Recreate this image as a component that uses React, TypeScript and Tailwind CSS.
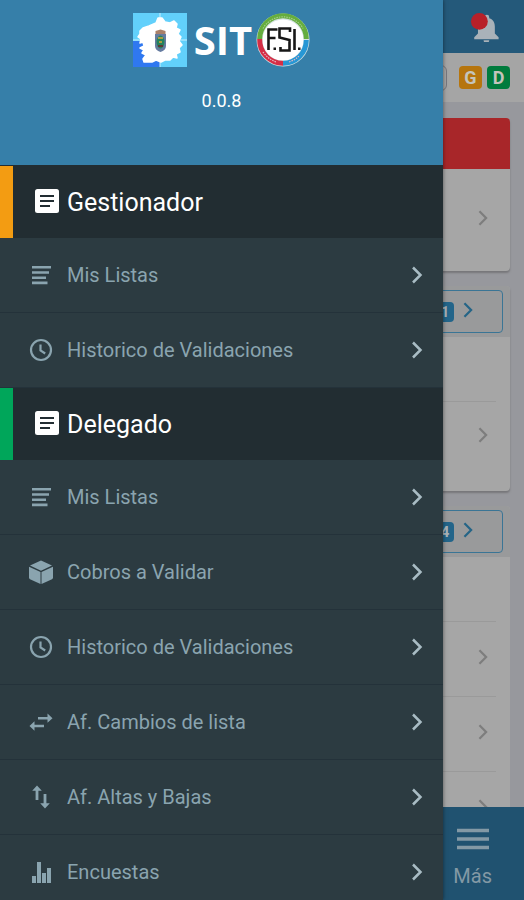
import type { ReactNode } from "react";

type IconName = "lines" | "clock" | "cube" | "swap" | "updown" | "bars";

const icons: Record<IconName, ReactNode> = {
  lines: (
    <path d="M3 3h19v2.600H3zM3 8.200h17v2.600H3zM3 13.400h14v2.600H3zM3 18.600h15.500v2.600H3z" fill="currentColor" />
  ),
  clock: (
    <g fill="none" stroke="currentColor" strokeWidth="2.200">
      <circle cx="12" cy="12" r="10" />
      <path d="M11.500 6.500v6l4.700 3" />
    </g>
  ),
  cube: (
    <g fill="currentColor">
      <path d="M12 0.500l11 5L12 10.700 1 5.500z" />
      <path d="M0 6.700l11.500 5.300V24L1 19.200Q0 18.700 0 17.500z" />
      <path d="M24 6.700l-11.500 5.300V24L23 19.200Q24 18.700 24 17.500z" />
    </g>
  ),
  swap: (
    <g fill="currentColor">
      <path d="M9 6.900h9.500V3.500L23.500 8.200 18.500 12.800V9.500H9z" />
      <path d="M15 14.700H5.500v-3.400L.5 16l5 4.700v-3.400H15z" />
    </g>
  ),
  updown: (
    <g fill="currentColor">
      <path d="M6.600 15V5.700H3.200L8 .5l4.800 5.200H9.400V15z" />
      <path d="M14.600 9v9.300h-3.400l4.800 5.200 4.800-5.200h-3.400V9z" />
    </g>
  ),
  bars: (
    <path d="M3 16h4v7H3zM8 2h4v21H8zM13 13h4v10h-4zM18 8h4v15h-4z" fill="currentColor" />
  ),
};

function Chevron({ className }: { className: string }) {
  return (
    <svg viewBox="0 0 12 18" className={`w-3 shrink-0 ${className}`} aria-hidden="true">
      <path d="M2 1.500L9.500 9 2 16.500" fill="none" stroke="currentColor" strokeWidth="2.500" />
    </svg>
  );
}

function MenuHeader({ title, accent }: { title: string; accent: string }) {
  return (
    <h2 className={`flex h-[72px] items-center gap-2 border-l-[13px] bg-[#222d32] pt-[2px] pl-[22px] text-[25px] leading-8 text-white ${accent}`}>
      <svg viewBox="0 0 24 24" className="mb-1 size-6 shrink-0" aria-hidden="true">
        <rect width="24" height="24" rx="2.500" fill="#fff" />
        <path d="M5 7h14M5 12h14M5 17h10" stroke="#222d32" strokeWidth="2.200" />
      </svg>
      {title}
    </h2>
  );
}

function MenuItem({ label, icon }: { label: string; icon: IconName }) {
  return (
    <li>
      <button type="button" className="flex h-[75px] w-full items-center border-b border-[#24323a] pr-5 pl-[29px] text-left text-[20px] leading-6 text-[#8aa4af]">
        <svg viewBox="0 0 24 24" className="mr-[14px] size-6 shrink-0" aria-hidden="true">
          {icons[icon]}
        </svg>
        <span className="flex-1">{label}</span>
        <Chevron className="h-[18px] text-[#a9bcc4]" />
      </button>
    </li>
  );
}

function SitLogo() {
  return (
    <svg viewBox="0 0 54 54" className="size-[54px]" aria-hidden="true">
      <rect width="54" height="54" fill="#62d0fb" />
      <path d="M0 28h27v26H0z" fill="#2f78f0" />
      <path d="M27 0v54M0 27h54" stroke="#c8f0ff" strokeWidth="1" />
      <path d="M7 18l3-3 6-2 7-3 2-5 4 0 3 4 5 1 4-2 3 3-1 4 4 2-2 4 3 3-2 4 3 4-3 3 1 4-4 2 1 4-4-1-3 3-5 0-4 2-5-2-4 2-8 0-1-3 3-4-4-2 2-3-4-2 4-2-1-4-3 1 1-4-3-2 2-3z" fill="#fff" stroke="#fff" strokeWidth="1.500" strokeLinejoin="round" />
      <path d="M22 21h11v12c0 3-2 5-5.500 6-3.500-1-5.500-3-5.500-6z" fill="#657ba0" />
      <path d="M22.500 21l0-3 5-1.500 5 1.500v3z" fill="#a98069" />
      <ellipse cx="27.500" cy="29" rx="4" ry="6.500" fill="#24825c" />
      <path d="M25 25h5M26 29h3" stroke="#d4a83b" strokeWidth="1.500" />
      <path d="M25 33h5" stroke="#5b3a35" strokeWidth="2" />
    </svg>
  );
}

function FsiLogo() {
  return (
    <svg viewBox="0 0 54 54" className="size-[54px]" aria-hidden="true">
      <circle cx="27" cy="27" r="26.500" fill="#d5e2e2" />
      <circle cx="27" cy="27" r="20.500" fill="#fff" />
      <g fill="none" strokeWidth="5">
        <path d="M3.700 26a23.300 23.300 0 0 1 46.600 0" stroke="#65ad3e" />
        <path d="M50.300 27A23.300 23.300 0 0 1 27 50.300" stroke="#2797d5" />
        <path d="M27 50.300A23.300 23.300 0 0 1 3.700 26" stroke="#d52e46" />
        <path d="M7 15.500A23 23 0 0 1 47 15.500" stroke="#a5ce8b" strokeWidth="1.200" strokeDasharray="1.500 1" />
        <path d="M7 39q5 7 13 10M33 49q6-2 10-6" stroke="#e6b6c0" strokeWidth="1.200" strokeDasharray="1.500 1" />
      </g>
      <g fill="none" stroke="#171717" strokeWidth="2.600">
        <path d="M12.500 37V16.500h9M12.500 25h7M34 19v-3.500H23.500v9L33.500 27v10.500h-9V34M38.500 16v21" />
      </g>
      <path d="M17.500 34.500H20V37h-2.500zM42 34.500h2.500V37H42z" fill="#171717" />
    </svg>
  );
}

function Drawer() {
  return (
    <aside className="absolute inset-y-0 left-0 w-[443px] max-w-full overflow-hidden bg-[#2c3b41] shadow-[0_0_4px_rgba(0,0,0,0.5)]">
      <header className="flex h-[166px] flex-col items-center border-b border-[#222d32] bg-[#367fa9] pt-[13px] text-white">
        <div className="flex items-center">
          <SitLogo />
          <span className="mr-1 ml-[7px] font-['Open_Sans',sans-serif] text-[40px] leading-[54px] font-bold">SIT</span>
          <FsiLogo />
        </div>
        <p className="mt-[22px] text-[18px] leading-6">0.0.8</p>
      </header>
      <nav aria-label="Menú">
        <MenuHeader title="Gestionador" accent="border-[#f39c12]" />
        <ul>
          <MenuItem label="Mis Listas" icon="lines" />
          <MenuItem label="Historico de Validaciones" icon="clock" />
        </ul>
        <MenuHeader title="Delegado" accent="border-[#00a65a]" />
        <ul>
          <MenuItem label="Mis Listas" icon="lines" />
          <MenuItem label="Cobros a Validar" icon="cube" />
          <MenuItem label="Historico de Validaciones" icon="clock" />
          <MenuItem label="Af. Cambios de lista" icon="swap" />
          <MenuItem label="Af. Altas y Bajas" icon="updown" />
          <MenuItem label="Encuestas" icon="bars" />
        </ul>
      </nav>
    </aside>
  );
}

function CardHeader({ count }: { count: number }) {
  return (
    <div className="bg-[#999a9b] px-[7px] py-1">
      <button type="button" className="flex h-[43px] w-full items-center justify-end gap-2 rounded-sm border border-[#3a7595] pr-[28px] text-[#256587]">
        <span className="flex h-5 w-[18px] items-center justify-center rounded-sm bg-[#23658a] text-[15px] leading-5 font-bold text-[#a9b3b8]">{count}</span>
        <Chevron className="mb-1 h-4" />
      </button>
    </div>
  );
}

function Row({ height }: { height: string }) {
  return (
    <div className={`mx-[14px] flex items-center justify-end border-t border-[#9a9a9a] pr-[7px] pb-1 ${height}`}>
      <Chevron className="h-4 text-[#7d7d7d]" />
    </div>
  );
}

export default function App() {
  return (
    <div className="relative flex h-screen flex-col overflow-hidden bg-[#97989d] font-[Roboto,sans-serif]">
      <header className="flex h-[53px] shrink-0 items-center justify-end bg-[#24597a] pr-6">
        <button type="button" aria-label="Notificaciones" className="size-[30px]">
          <svg viewBox="0 0 32 32" className="size-[30px]">
            <path d="M18 3a2.500 2.500 0 0 1 2.500 2.500v1.200c4.500 1.400 6 5 6 9v7.300l4 4v2h-26v-2l4-4v-7.300c0-4 2-7.600 7-9V5.500A2.500 2.500 0 0 1 18 3zM14.500 30h6a3 3 0 0 1-6 0z" fill="#a9b2b9" />
            <circle cx="10" cy="10" r="9" fill="#b82029" />
          </svg>
        </button>
      </header>
      <div className="flex h-[49px] shrink-0 items-center justify-end bg-[#a5a5a5] pr-[14px] text-[18px] leading-6 font-bold text-[#c4c4bc]">
        <span className="mr-3 h-[26px] w-20 rounded-md border border-[#77777e]" />
        <span className="mr-[5px] flex size-[23px] items-center justify-center rounded-sm bg-[#b6750e]">G</span>
        <span className="flex size-[23px] items-center justify-center rounded-sm bg-[#007b3d]">D</span>
      </div>
      <main className="flex min-h-0 flex-1 flex-col gap-[15px] overflow-hidden pt-4 pr-[14px]">
        <section className="shrink-0 overflow-hidden rounded-sm bg-[#a6a6a6] shadow-[0_2px_2px_#77777a]">
          <div className="h-[51px] bg-[#a82629]" />
          <div className="flex h-[102px] items-center justify-end pr-[21px] pb-1">
            <Chevron className="h-4 text-[#7d7d7d]" />
          </div>
        </section>
        <section className="shrink-0 overflow-hidden rounded-sm bg-[#a6a6a6] pb-[19px] shadow-[0_2px_2px_#77777a]">
          <CardHeader count={1} />
          <div className="h-16" />
          <Row height="h-[71px]" />
        </section>
        <section className="shrink-0 overflow-hidden rounded-sm bg-[#a6a6a6]">
          <CardHeader count={4} />
          <div className="h-16" />
          <Row height="h-[75px]" />
          <Row height="h-[75px]" />
          <Row height="h-[75px]" />
        </section>
      </main>
      <footer className="z-0 flex h-[93px] shrink-0 justify-end bg-[#205270] pr-8">
        <button type="button" className="flex flex-col items-center pt-[21px] text-[20px] leading-6 text-[#8399a5]">
          <svg viewBox="0 0 32 22" className="mb-[14px] h-[22px] w-8" aria-hidden="true">
            <path d="M0 2.500h32M0 11h32M0 19.500h32" stroke="currentColor" strokeWidth="3.500" />
          </svg>
          Más
        </button>
      </footer>
      <Drawer />
    </div>
  );
}
